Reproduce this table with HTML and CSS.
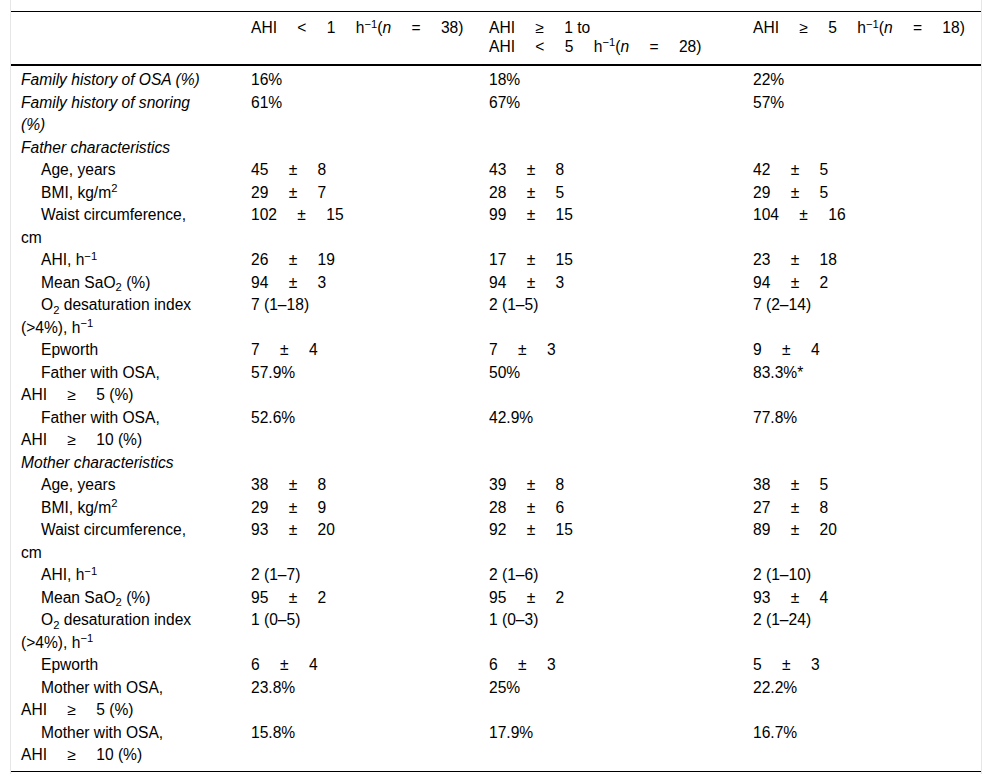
FILE: index.html
```html
<!DOCTYPE html>
<html lang="en">
<head>
<meta charset="utf-8">
<title>Table</title>
<link rel="stylesheet" href="styles.css">
</head>
<body>
<div class="wrap">
<table class="tbl">
<thead>
<tr>
<th class="c1"></th>
<th class="c2"><span class="v">AHI &lt; 1 h<sup>−1</sup>(<i>n</i> = 38)</span></th>
<th class="c3"><span class="v">AHI ≥ 1</span> to <span class="v">AHI &lt; 5 h<sup>−1</sup>(<i>n</i> = 28)</span></th>
<th class="c4"><span class="v">AHI ≥ 5 h<sup>−1</sup>(<i>n</i> = 18)</span></th>
</tr>
</thead>
<tbody>
<tr class="first"><td class="it">Family history of OSA (%)</td><td>16%</td><td>18%</td><td>22%</td></tr>
<tr><td class="it">Family history of snoring (%)</td><td>61%</td><td>67%</td><td>57%</td></tr>
<tr><td class="it">Father characteristics</td><td></td><td></td><td></td></tr>
<tr><td class="ind">Age, years</td><td><span class="v">45 ± 8</span></td><td><span class="v">43 ± 8</span></td><td><span class="v">42 ± 5</span></td></tr>
<tr><td class="ind">BMI, kg/m<sup>2</sup></td><td><span class="v">29 ± 7</span></td><td><span class="v">28 ± 5</span></td><td><span class="v">29 ± 5</span></td></tr>
<tr><td class="ind">Waist circumference, cm</td><td><span class="v">102 ± 15</span></td><td><span class="v">99 ± 15</span></td><td><span class="v">104 ± 16</span></td></tr>
<tr><td class="ind">AHI, h<sup>−1</sup></td><td><span class="v">26 ± 19</span></td><td><span class="v">17 ± 15</span></td><td><span class="v">23 ± 18</span></td></tr>
<tr><td class="ind">Mean SaO<sub>2</sub> (%)</td><td><span class="v">94 ± 3</span></td><td><span class="v">94 ± 3</span></td><td><span class="v">94 ± 2</span></td></tr>
<tr><td class="ind">O<sub>2</sub> desaturation index (&gt;4%), h<sup>−1</sup></td><td>7 (1–18)</td><td>2 (1–5)</td><td>7 (2–14)</td></tr>
<tr><td class="ind">Epworth</td><td><span class="v">7 ± 4</span></td><td><span class="v">7 ± 3</span></td><td><span class="v">9 ± 4</span></td></tr>
<tr><td class="ind">Father with OSA, <span class="v">AHI ≥ 5</span> (%)</td><td>57.9%</td><td>50%</td><td>83.3%*</td></tr>
<tr><td class="ind">Father with OSA, <span class="v">AHI ≥ 10</span> (%)</td><td>52.6%</td><td>42.9%</td><td>77.8%</td></tr>
<tr><td class="it">Mother characteristics</td><td></td><td></td><td></td></tr>
<tr><td class="ind">Age, years</td><td><span class="v">38 ± 8</span></td><td><span class="v">39 ± 8</span></td><td><span class="v">38 ± 5</span></td></tr>
<tr><td class="ind">BMI, kg/m<sup>2</sup></td><td><span class="v">29 ± 9</span></td><td><span class="v">28 ± 6</span></td><td><span class="v">27 ± 8</span></td></tr>
<tr><td class="ind">Waist circumference, cm</td><td><span class="v">93 ± 20</span></td><td><span class="v">92 ± 15</span></td><td><span class="v">89 ± 20</span></td></tr>
<tr><td class="ind">AHI, h<sup>−1</sup></td><td>2 (1–7)</td><td>2 (1–6)</td><td>2 (1–10)</td></tr>
<tr><td class="ind">Mean SaO<sub>2</sub> (%)</td><td><span class="v">95 ± 2</span></td><td><span class="v">95 ± 2</span></td><td><span class="v">93 ± 4</span></td></tr>
<tr><td class="ind">O<sub>2</sub> desaturation index (&gt;4%), h<sup>−1</sup></td><td>1 (0–5)</td><td>1 (0–3)</td><td>2 (1–24)</td></tr>
<tr><td class="ind">Epworth</td><td><span class="v">6 ± 4</span></td><td><span class="v">6 ± 3</span></td><td><span class="v">5 ± 3</span></td></tr>
<tr><td class="ind">Mother with OSA, <span class="v">AHI ≥ 5</span> (%)</td><td>23.8%</td><td>25%</td><td>22.2%</td></tr>
<tr class="last"><td class="ind">Mother with OSA, <span class="v">AHI ≥ 10</span> (%)</td><td>15.8%</td><td>17.9%</td><td>16.7%</td></tr>
</tbody>
</table>
</div>
</body>
</html>
```
FILE: styles.css
```css
html, body {
  margin: 0;
  padding: 0;
  background: #fff;
}
body {
  font-family: "Liberation Sans", Arial, sans-serif;
  font-size: 15.6px;
  color: #000;
}
.wrap {
  margin: 0 10px;
  border-left: 1px solid #e6e6e6;
  border-right: 1px solid #e6e6e6;
  padding: 11px 0 2px;
}
.tbl {
  width: 100%;
  border-collapse: collapse;
  table-layout: fixed;
  border-top: 1px solid #000;
  border-bottom: 1px solid #000;
}
.tbl th,
.tbl td {
  box-sizing: border-box;
}
.tbl th {
  font-weight: normal;
  text-align: left;
  vertical-align: top;
  line-height: 18.5px;
  padding: 7px 10px 8px 10px;
  border-bottom: 2px solid #000;
}
.tbl td {
  vertical-align: top;
  line-height: 22.5px;
  padding: 0 10px;
}
.tbl .c1 { width: 230px; }
.tbl .c2 { width: 238px; }
.tbl .c3 { width: 264px; }
.tbl .c4 { width: 238px; }
.tbl td:first-child,
.tbl th:first-child {
  padding-right: 36px;
}
.tbl .it {
  font-style: italic;
}
.tbl .ind {
  text-indent: 20px;
}
.tbl .first td {
  padding-top: 3px;
}
.tbl .last td {
  padding-bottom: 4px;
}
.v {
  white-space: nowrap;
  word-spacing: 16px;
}
sup, sub {
  font-size: 0.72em;
  line-height: 0;
  position: relative;
  vertical-align: baseline;
}
sup {
  top: -0.45em;
}
sub {
  top: 0.35em;
}
```
